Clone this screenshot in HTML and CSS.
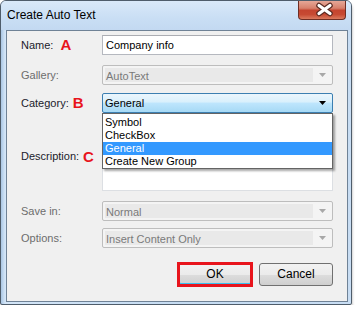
FILE: index.html
```html
<!DOCTYPE html>
<html>
<head>
<meta charset="utf-8">
<link rel="stylesheet" href="styles.css">
</head>
<body>
<div class="window">
  <div class="titlebar">
    <span class="title">Create Auto Text</span>
    <div class="close">
      <svg width="48" height="18" viewBox="0 0 48 18">
        <path d="M20 4.5 L31 12.5 M31 4.5 L20 12.5" stroke="#5a2a22" stroke-width="5.5" stroke-linecap="round" fill="none"/>
        <path d="M20 4.5 L31 12.5 M31 4.5 L20 12.5" stroke="#ffffff" stroke-width="3.2" stroke-linecap="round" fill="none"/>
      </svg>
    </div>
  </div>
  <div class="client">
    <div class="row row-name">
      <div class="label">Name:<span class="mark mark-a">A</span></div>
      <div class="field input">Company info</div>
    </div>
    <div class="row row-gallery">
      <div class="label disabled-label">Gallery:</div>
      <div class="field combo disabled">
        <div class="val">AutoText</div>
        <div class="arrow"><svg width="7" height="4" viewBox="0 0 7 4"><polygon points="0,0 7,0 3.5,4" fill="#a8a8a8"/></svg></div>
      </div>
    </div>
    <div class="row row-category">
      <div class="label">Category:<span class="mark mark-b">B</span></div>
      <div class="field combo focused">
        <div class="val">General</div>
        <div class="arrow"><svg width="7" height="4" viewBox="0 0 7 4"><polygon points="0,0 7,0 3.5,4" fill="#000000"/></svg></div>
        <ul class="droplist">
          <li>Symbol</li>
          <li>CheckBox</li>
          <li class="selected">General</li>
          <li>Create New Group</li>
        </ul>
      </div>
    </div>
    <div class="row row-desc">
      <div class="label">Description:<span class="mark mark-c">C</span></div>
      <div class="field textarea"></div>
    </div>
    <div class="row row-save">
      <div class="label disabled-label">Save in:</div>
      <div class="field combo disabled">
        <div class="val">Normal</div>
        <div class="arrow"><svg width="7" height="4" viewBox="0 0 7 4"><polygon points="0,0 7,0 3.5,4" fill="#a8a8a8"/></svg></div>
      </div>
    </div>
    <div class="row row-options">
      <div class="label disabled-label">Options:</div>
      <div class="field combo disabled">
        <div class="val">Insert Content Only</div>
        <div class="arrow"><svg width="7" height="4" viewBox="0 0 7 4"><polygon points="0,0 7,0 3.5,4" fill="#a8a8a8"/></svg></div>
      </div>
    </div>
    <div class="buttons">
      <div class="btn btn-ok">OK</div>
      <div class="btn">Cancel</div>
    </div>
  </div>
</div>
</body>
</html>
```
FILE: styles.css
```css
html, body {
  margin: 0;
  padding: 0;
  background: #ffffff;
}
body {
  font-family: "Liberation Sans", Arial, sans-serif;
  font-size: 11px;
  color: #1a1a1a;
}
.window {
  box-sizing: border-box;
  width: 352px;
  height: 305px;
  border: 1px solid #4f5d6b;
  border-radius: 6px 6px 2px 2px;
  background: linear-gradient(to right, #a9c6e4 0px, #d3e5f7 4px, #c6dcf2 50%, #c8ddf3 100%);
  padding: 0 3px 2px 5px;
  display: flex;
  flex-direction: column;
  box-shadow: 0 3px 3px rgba(0,0,0,0.35);
}
.titlebar {
  height: 29px;
  display: flex;
  align-items: flex-start;
  justify-content: space-between;
  margin: 0 -3px 0 -5px;
  padding: 0 5px 0 6px;
  background: linear-gradient(to bottom, #d9e9f9 0%, #c9def4 60%, #c3d9f1 100%);
  border-radius: 5px 5px 0 0;
}
.title {
  font-size: 12px;
  color: #000;
  padding-top: 7px;
}
.close {
  width: 48px;
  height: 19px;
  box-sizing: border-box;
  border: 1px solid #6e2e24;
  border-top: none;
  border-radius: 0 0 4px 4px;
  background: linear-gradient(to bottom, #e6a797 0%, #d7806c 40%, #c4442f 52%, #c74a33 75%, #da7a5e 100%);
}
.close svg {
  display: block;
}
.client {
  box-sizing: border-box;
  height: 273px;
  border: 1px solid #6f8296;
  background: #f0f0f0;
  padding: 4px 14px 0 14px;
  display: flex;
  flex-direction: column;
}
.row {
  display: flex;
  align-items: center;
}
.label {
  width: 81px;
  flex: none;
  color: #1b1b2b;
  white-space: nowrap;
  display: flex;
  align-items: center;
}
.disabled-label {
  color: #6d6d6d;
}
.mark {
  color: #e8141c;
  font-weight: bold;
  font-size: 15px;
  line-height: 15px;
}
.mark-a { margin-left: 7px; }
.mark-b { margin-left: 4px; }
.mark-c { margin-left: 4px; }
.field {
  box-sizing: border-box;
  width: 231px;
  height: 20px;
  position: relative;
}
.input {
  background: #fff;
  border: 1px solid #b5b8bf;
  border-top-color: #abadb3;
  padding: 0 3px;
  line-height: 18px;
  color: #000;
}
.row-gallery { margin-top: 10px; }
.row-category { margin-top: 8px; }
.row-desc { margin-top: 6px; }
.row-desc .label { padding-top: 3px; }
.row-save { margin-top: 10px; }
.row-options { margin-top: 7px; }
.combo {
  display: flex;
  align-items: stretch;
  border-radius: 2px;
}
.combo .val {
  flex: 1;
  line-height: 16px;
}
.combo .arrow {
  width: 19px;
  flex: none;
  display: flex;
  align-items: center;
  justify-content: center;
}
.combo .arrow svg {
  display: block;
}
.disabled {
  border: 1px solid #bdbdbd;
  background: #f4f4f4;
}
.disabled .val {
  background: #e9e9e9;
  color: #7a7a7a;
  margin: 2px 0 2px 2px;
  padding-left: 1px;
}
.focused {
  border: 1px solid #3c7fb1;
  background: linear-gradient(to bottom, #ebf6fd 0%, #d9f0fc 45%, #bee6fd 50%, #a7d9f5 100%);
}
.focused .val {
  padding-left: 2px;
  line-height: 18px;
  color: #000;
}
.droplist {
  position: absolute;
  top: 19px;
  left: -1px;
  width: 231px;
  height: 56px;
  box-sizing: border-box;
  margin: 0;
  padding: 2px 0 0 0;
  list-style: none;
  background: #fff;
  border: 1px solid #646464;
  box-shadow: 2px 2px 2px rgba(0,0,0,0.35);
  z-index: 5;
}
.droplist li {
  height: 13px;
  line-height: 13px;
  padding-left: 2px;
  color: #000;
}
.droplist li.selected {
  background: #3399ff;
  color: #fff;
}
.textarea {
  height: 72px;
  background: #fff;
  border: 1px solid #dcdfe3;
}
.buttons {
  margin-top: 15px;
  display: flex;
  justify-content: flex-end;
  gap: 7px;
  padding-right: 0;
}
.btn {
  box-sizing: border-box;
  width: 74px;
  height: 23px;
  border: 1px solid #707070;
  border-radius: 3px;
  background: linear-gradient(to bottom, #f2f2f2 0%, #ebebeb 50%, #dddddd 51%, #cfcfcf 100%);
  text-align: center;
  line-height: 21px;
  font-size: 12px;
  font-weight: normal;
  color: #000;
  position: relative;
}
.btn-ok {
  border-color: #3c7fb1;
  box-shadow: inset 0 -2px 0 #39c0ee;
}
.btn-ok::after {
  content: "";
  position: absolute;
  left: -2px;
  top: -2px;
  right: -2px;
  bottom: -2px;
  border: 3.5px solid #e8141c;
}
```
